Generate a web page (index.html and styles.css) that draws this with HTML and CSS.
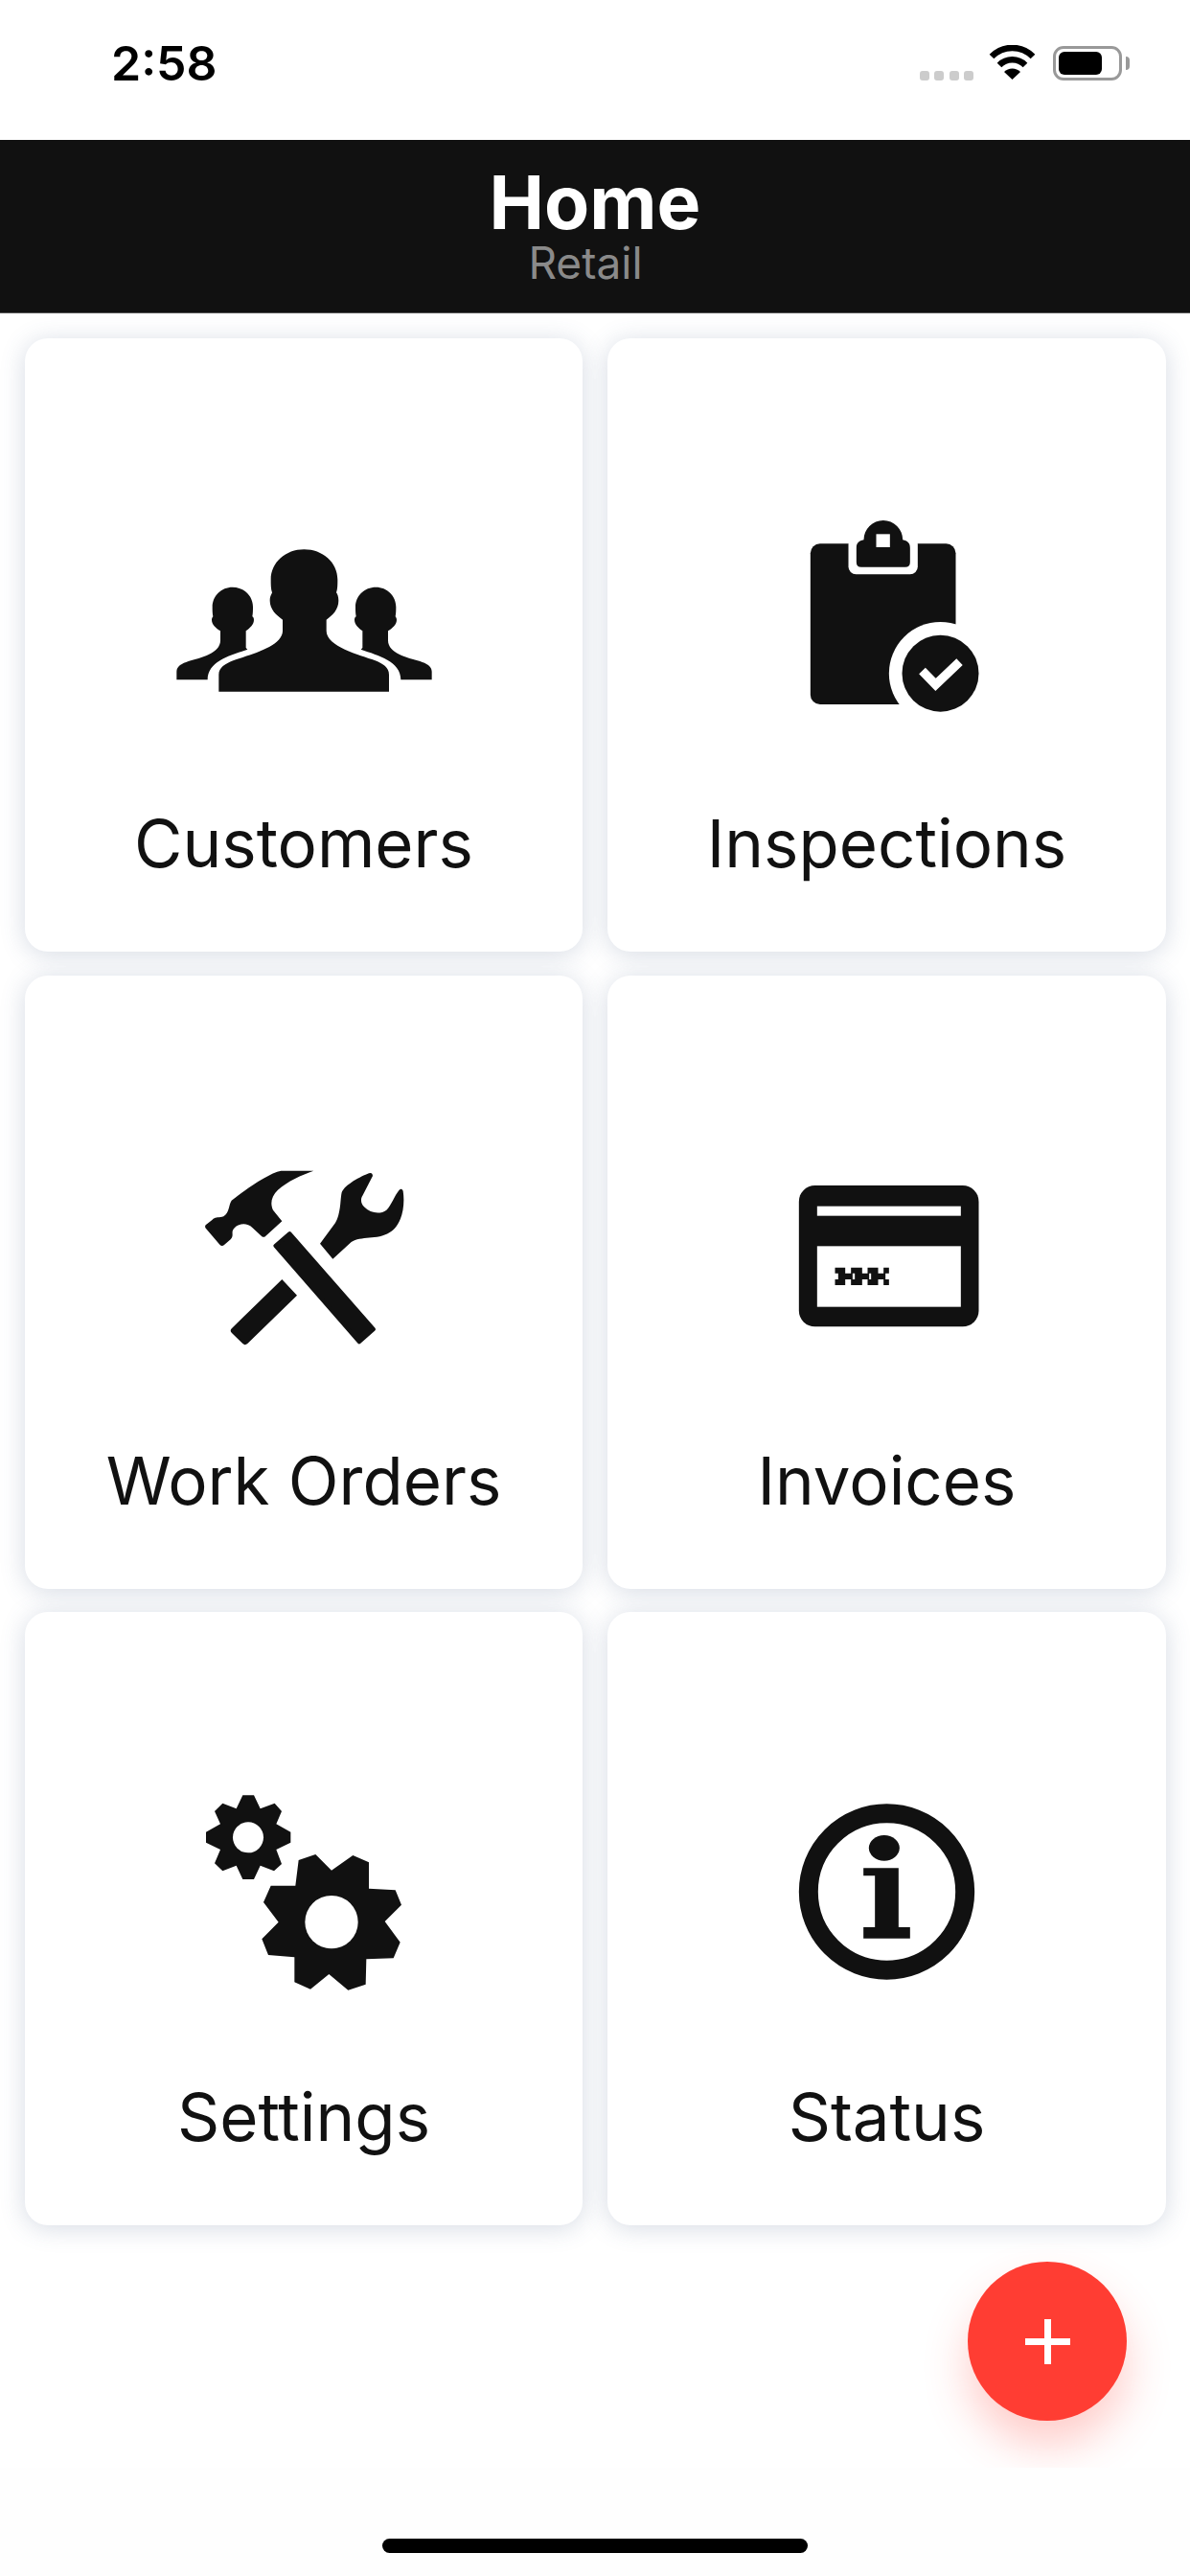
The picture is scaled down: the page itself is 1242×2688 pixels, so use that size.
FILE: index.html

```html
<!DOCTYPE html>
<html lang="en">
<head>
  <meta charset="UTF-8">
  <meta name="viewport" content="width=device-width, initial-scale=1.0">
  <title>Home</title>
  <link rel="stylesheet" href="styles.css">
</head>
<body>
  <div class="status">
    <div class="time">2:58</div>
    <div class="status-icons">
      <div class="signal"><i></i><i></i><i></i><i></i></div>
      <svg class="wifi" width="49" height="36" viewBox="0 0 49 36">
        <path d="M3 12 A30 30 0 0 1 46 12" fill="none" stroke="#000" stroke-width="6.5"/>
        <path d="M11 21 A19 19 0 0 1 38 21" fill="none" stroke="#000" stroke-width="6.5"/>
        <path d="M24.5 36 L16 28 A12 12 0 0 1 33 28 Z"/>
      </svg>
      <div class="battery"><div class="battery-level"></div></div>
      <div class="battery-nub"></div>
    </div>
  </div>
  <header>
    <h1>Home</h1>
    <div class="subtitle">Retail</div>
  </header>
  <main>
    <div class="grid">
      <div class="card">
        <svg class="icon" viewBox="111 -15 720 720">
          <path id="person-side" d="M73 538 V512 C73 495 90 487 110 480 C150 470 210 455 210 415 V385 C195 375 183 365 183 350 C183 345 186 342 187 340 C185 330 185 320 185 310 C185 275 213 248 248 248 C284 248 312 275 312 310 C312 320 312 330 310 340 C313 342 315 345 315 350 C315 365 303 375 290 385 V438 L295 443 C240 462 170 480 170 538 Z"/>
          <use href="#person-side" transform="translate(945 0) scale(-1 1)"/>
          <path d="M205 575 V522 C205 500 225 488 250 478 C300 460 405 435 405 385 V350 C385 335 365 318 365 290 C365 275 372 268 372 265 C368 255 368 240 368 225 C368 170 415 130 472 130 C530 130 577 170 577 225 C577 240 577 255 573 265 C576 268 580 278 580 290 C580 318 562 335 542 350 V385 C542 435 645 460 695 478 C720 488 738 500 738 522 V575 Z"/>
        </svg>
        <div class="label">Customers</div>
      </div>
      <div class="card">
        <svg class="icon" viewBox="-43.5 -15 720 720">
          <rect x="76" y="112" width="455" height="503" rx="30"/>
          <rect x="195" y="90" width="217" height="118" rx="24" fill="#fff"/>
          <path d="M243 100 A60 60 0 0 1 365 100 C380 103 388 110 388 125 V170 Q388 185 373 185 H235 Q220 185 220 170 V125 C220 110 228 103 243 100 Z"/>
          <rect x="282" y="82" width="43" height="41" fill="#fff"/>
          <circle cx="483" cy="518" r="161" fill="#fff"/>
          <circle cx="483" cy="518" r="120"/>
          <path d="M426 510 L468 553 L543 482" fill="none" stroke="#fff" stroke-width="28"/>
        </svg>
        <div class="label">Inspections</div>
      </div>
      <div class="card">
        <svg class="icon" viewBox="21 -33 720 720">
          <path d="M412 62 H310 C270 70 200 120 155 155 C145 170 150 190 130 205 C115 210 105 205 95 215 L74 232 Q70 238 75 243 L118 293 Q125 300 132 294 L152 277 C165 262 150 255 165 240 C180 225 205 225 220 240 L250 268 Q256 272 262 266 L313 220 L285 185 C275 165 280 140 300 122 C330 95 375 75 412 62 Z"/>
          <path d="M337 258 L292 297 L555 598 L600 558 Z" stroke="#111" stroke-width="12" stroke-linejoin="round"/>
          <path d="M313 402 L360 452 L205 603 Q197 610 190 603 L156 570 Q148 562 156 555 Z"/>
          <path d="M432 290 L472 338 L530 285 C560 265 610 280 650 255 C685 235 700 180 692 125 Q688 115 680 122 C665 140 655 170 640 185 C620 200 590 195 570 175 C560 165 558 150 565 140 L597 78 Q596 66 585 70 C560 80 510 105 500 130 C495 150 498 195 480 225 Z"/>
        </svg>
        <div class="label">Work Orders</div>
      </div>
      <div class="card">
        <svg class="icon" viewBox="-13.5 -63 720 720">
          <rect x="70" y="78" width="563" height="442" rx="50"/>
          <rect x="127" y="143" width="450" height="30" fill="#fff"/>
          <rect x="127" y="268" width="450" height="190" fill="#fff"/>
          <path d="M183 335 H215 V353 H183 Z M233 335 H268 V353 H233 Z M285 335 H318 V353 H285 Z M335 335 H352 V353 H335 Z M193 353 H238 V372 H193 Z M245 353 H290 V372 H245 Z M296 353 H341 V372 H296 Z M183 372 H215 V390 H183 Z M233 372 H268 V390 H233 Z M285 372 H318 V390 H285 Z M335 372 H352 V390 H335 Z"/>
        </svg>
        <div class="label">Invoices</div>
      </div>
      <div class="card">
        <svg class="icon" viewBox="-9 -18 720 720">
          <polygon points="160,40 195,40 215,82 260,65 282,90 265,130 310,155 310,188 265,210 282,255 258,277 215,260 195,303 160,303 140,260 97,277 72,253 90,210 45,188 45,155 90,130 72,90 97,65 140,82"/>
          <circle cx="177" cy="172" r="48" fill="#fff"/>
          <polygon points="388,225 438,275 505,228 555,250 555,332 638,337 657,383 605,435 653,500 632,550 547,553 545,632 490,650 430,600 372,647 322,625 322,547 240,540 220,490 272,437 225,375 248,323 325,323 335,243"/>
          <circle cx="438" cy="437" r="83" fill="#fff"/>
        </svg>
        <div class="label">Settings</div>
      </div>
      <div class="card">
        <svg class="icon" viewBox="-43.5 -48 720 720">
          <circle cx="315" cy="312" r="245" fill="none" stroke="#111" stroke-width="60"/>
          <ellipse cx="307" cy="175" rx="48" ry="40"/>
          <path d="M242 238 H352 V423 H388 V458 H242 V423 H278 V262 H242 Z"/>
        </svg>
        <div class="label">Status</div>
      </div>
    </div>
    <button class="fab"><span class="plus"></span></button>
  </main>
  <div class="home-bar"></div>
</body>
</html>
```

FILE: styles.css

```css
* { box-sizing: border-box; }
body { margin: 0; width: 1242px; height: 2688px; overflow: hidden; background: #fefefe; font-family: Inter, 'Noto Sans', sans-serif; color: #111; }

.status { height: 146px; background: #fff; display: flex; justify-content: space-between; padding: 47px 63px 0 116px; }
.time { font-size: 50px; line-height: 38px; font-weight: 600; color: #000; }
.status-icons { display: flex; align-items: flex-start; height: 38px; }
.signal { display: flex; gap: 5.5px; margin-top: 27px; margin-right: 16px; }
.signal i { width: 10px; height: 10px; border-radius: 3px; background: #ccc; }
.wifi { display: block; fill: #000; margin-right: 18px; }
.battery { width: 72px; height: 36px; margin-top: 1px; border: 3px solid #999; border-radius: 11px; padding: 3px; }
.battery-level { width: 45px; height: 24px; background: #000; border-radius: 6px; }
.battery-nub { width: 4px; height: 14px; margin: 12px 0 0 4px; background: #999; border-radius: 0 4px 4px 0; }

header { height: 181px; background: #111; border-bottom: 1px solid #555; text-align: center; padding-top: 27px; }
h1 { margin: 0; font-size: 77px; line-height: 76px; font-weight: 700; color: #fff; }
.subtitle { font-size: 46px; line-height: 50px; padding-right: 20px; color: #8a8a8a; }

main { position: relative; height: 2248px; overflow: hidden; background: #fff; padding: 26px 25px 0 26px; }
.grid { display: grid; grid-template-columns: 582px 583px; grid-auto-rows: 640px; column-gap: 26px; row-gap: 24.5px; }
.card { background: #fff; border-radius: 24px; box-shadow: 0 3px 26px rgba(70, 90, 130, .22); display: flex; flex-direction: column; align-items: center; padding-top: 172px; }
.icon { display: block; width: 240px; height: 240px; fill: #111; overflow: visible; }
.label { margin-top: 75px; font-size: 69px; line-height: 80px; color: #111; }

.fab { position: absolute; left: 1010px; top: 2033px; width: 166px; height: 166px; padding: 0; border: none; border-radius: 50%; background: #ff3d33; box-shadow: 0 26px 46px rgba(255, 61, 51, .26); display: flex; align-items: center; justify-content: center; }
.plus { position: relative; display: block; width: 47px; height: 47px; }
.plus::before, .plus::after { content: ""; position: absolute; background: #fff; }
.plus::before { left: 0; right: 0; top: 20px; height: 7px; }
.plus::after { top: 0; bottom: 0; left: 20px; width: 7px; }

.home-bar { width: 444px; height: 15px; margin: 74px auto 0; background: #000; border-radius: 8px; }
```
